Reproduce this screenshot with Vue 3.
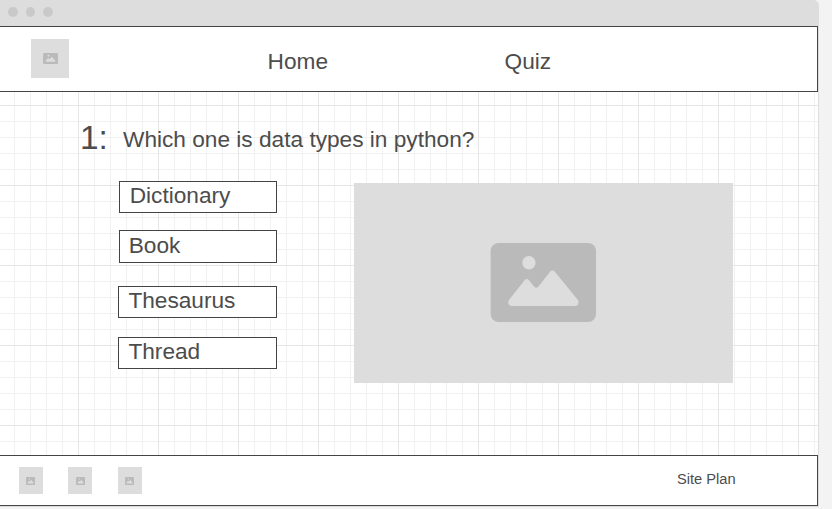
<script setup>
import { h } from 'vue'

const options = [
  { label: 'Dictionary', name: 'dictionary' },
  { label: 'Book', name: 'book' },
  { label: 'Thesaurus', name: 'thesaurus' },
  { label: 'Thread', name: 'thread' },
]
const links = ['first', 'second', 'third']

const PictureIcon = () =>
  h('svg', { viewBox: '0 0 106 79', preserveAspectRatio: 'none' }, [
    h('rect', { x: 0.6, width: 105.4, height: 79, rx: 8, fill: '#bababa' }),
    h('circle', { cx: 38.9, cy: 19.8, r: 6.7, fill: '#dddddd' }),
    h('path', {
      transform: 'translate(0.3 0)',
      d: 'M18.6 57 L34.3 37.2 Q36.5 34.8 38.7 37.2 L44 43.8 Q46 45.8 48 43.8 L60 28.6 Q62.2 26.2 64.4 28.6 L87.6 57 Q89.6 61 85.6 63 L21 63 Q16.6 61.8 18.6 57 Z',
      fill: '#dddddd',
    }),
  ])
</script>

<template>
  <div class="window">
    <div class="titlebar">
      <i class="dot"></i>
      <i class="dot middle"></i>
      <i class="dot"></i>
    </div>
    <header class="header">
      <div class="logo"><PictureIcon class="logo-icon" /></div>
      <nav class="nav">
        <a class="home">Home</a>
        <a class="quiz">Quiz</a>
      </nav>
    </header>
    <main class="main">
      <h1 class="question">
        <span class="number">1:</span>
        <span class="prompt">Which one is data types in python?</span>
      </h1>
      <div class="content">
        <div class="options">
          <div v-for="o in options" :key="o.name" class="option" :class="o.name">
            <span class="label">{{ o.label }}</span>
          </div>
        </div>
        <div class="picture"><PictureIcon class="picture-icon" /></div>
      </div>
    </main>
    <footer class="footer">
      <div class="links">
        <div v-for="l in links" :key="l" class="link" :class="l">
          <PictureIcon class="link-icon" />
        </div>
      </div>
      <span class="plan">Site Plan</span>
    </footer>
  </div>
</template>

<style>
body {
  background: #f3f3f3;
  overflow: hidden;
}
</style>

<style scoped>
.window {
  box-sizing: border-box;
  width: 819px;
  height: 507px;
  display: flex;
  flex-direction: column;
  border-right: 1px solid #dddddd;
  border-bottom: 1px solid #dddddd;
  border-top-right-radius: 5px;
  overflow: hidden;
  background: #ffffff;
  color: #4c4c4c;
  font: 22.67px/26px 'Liberation Sans', Arial, sans-serif;
}
.titlebar {
  box-sizing: border-box;
  height: 26px;
  flex: none;
  display: flex;
  gap: 8px;
  padding: 7px 0 0 8px;
  background: #dddddd;
}
.dot {
  width: 10px;
  height: 10px;
  border-radius: 50%;
  background: #c9c9c9;
}
.middle {
  width: 9px;
}
.header {
  box-sizing: border-box;
  height: 66px;
  flex: none;
  display: flex;
  align-items: flex-start;
  padding: 12px 0 0 31px;
  border: 1px solid #444444;
  border-left: 0;
  background: #ffffff;
}
.logo,
.picture,
.link {
  display: flex;
  background: #dddddd;
}
.logo {
  align-items: center;
  justify-content: center;
  width: 38px;
  height: 39px;
}
.logo-icon {
  width: 15px;
  height: 11px;
}
.nav {
  display: flex;
  padding: 9px 0 0 198.6px;
}
.home {
  width: 237px;
}
.main {
  box-sizing: border-box;
  height: 363px;
  flex: none;
  padding: 26px 0 0 80px;
  background-image:
    linear-gradient(90deg, #e6e6e6 1px, transparent 1px),
    linear-gradient(#e6e6e6 1px, transparent 1px),
    linear-gradient(90deg, #f1f1f1 1px, transparent 1px),
    linear-gradient(#f1f1f1 1px, transparent 1px);
  background-size: 80px 80px, 80px 80px, 16px 16px, 16px 16px;
  background-position: 78px 13px, 78px 13px, 14px 13px, 14px 13px;
}
.question {
  display: flex;
  align-items: flex-start;
  height: 63px;
  margin: 0;
  font-size: 22.67px;
  font-weight: 400;
}
.number {
  width: 43px;
  font-size: 33.33px;
  line-height: 39px;
}
.prompt {
  padding-top: 8px;
}
.content {
  display: flex;
  align-items: flex-start;
}
.options {
  display: flex;
  flex-direction: column;
  align-items: flex-end;
  width: 197px;
}
.option {
  box-sizing: border-box;
  width: 159px;
  height: 32px;
  padding: 0 0 0 9.4px;
  border: 1px solid #444444;
  background: #ffffff;
}
.label {
  display: block;
}
.dictionary {
  width: 158px;
}
.dictionary {
  padding-left: 9.7px;
}
.book {
  width: 158px;
  height: 33px;
  margin-top: 17px;
  padding-top: 1px;
  padding-left: 8.7px;
}
.thesaurus {
  margin-top: 23px;
}
.thread {
  margin-top: 19px;
}
.picture {
  box-sizing: border-box;
  width: 379px;
  height: 200px;
  margin: 2px 0 0 77px;
  padding: 60px 0 0 136px;
}
.picture-icon {
  width: 106px;
  height: 79px;
}
.footer {
  box-sizing: border-box;
  height: 51px;
  flex: none;
  display: flex;
  align-items: flex-start;
  padding: 11px 0 0 19px;
  border: 1px solid #444444;
  border-left: 0;
  background: #ffffff;
}
.links {
  display: flex;
  width: 658px;
}
.link {
  box-sizing: border-box;
  width: 24px;
  height: 27px;
  padding: 10px 0 0 7px;
}
.second {
  margin-left: 25px;
  padding-left: 8px;
}
.third {
  margin-left: 26px;
}
.link-icon {
  width: 9px;
  height: 8px;
}
.plan {
  font-size: 14.67px;
  line-height: 24px;
}
</style>
